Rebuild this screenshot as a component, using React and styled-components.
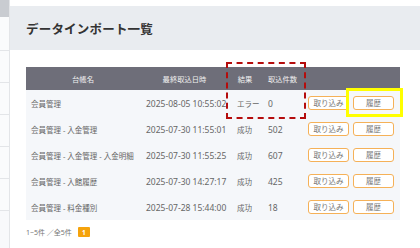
import React from 'react';
import styled, { createGlobalStyle } from 'styled-components';

const GlobalStyle = createGlobalStyle`
  html, body {
    margin: 0;
    padding: 0;
    background: #fff;
  }
  body {
    font-family: "Noto Sans", "Noto Sans CJK JP", sans-serif;
    color: #555;
  }
`;

const Page = styled.div`
  display: flex;
  width: 420px;
  height: 248px;
  overflow: hidden;
  position: relative;
`;

const Sidebar = styled.div`
  width: 9px;
  flex-shrink: 0;
  border-right: 1px solid #e3e5e8;
  background: #f8f9fb;
  display: flex;
  flex-direction: column;
`;

const SideTop = styled.div`
  height: 17px;
  background: #c9ccd1;
`;

const SideItem = styled.div`
  height: ${props => props.h || 32}px;
  border-bottom: 1px solid #e3e5e8;
  box-sizing: border-box;
  background: #fafbfc;
`;

const Main = styled.div`
  flex: 1;
  padding-top: 6px;
  display: flex;
  flex-direction: column;
`;

const TitleBar = styled.div`
  height: 44px;
  background: #e9ecf0;
  display: flex;
  align-items: center;
  padding-left: 16px;
`;

const Title = styled.h1`
  margin: 0;
  font-size: 12.5px;
  font-weight: 700;
  color: #333;
  letter-spacing: 0.2px;
`;

const Content = styled.div`
  padding: 17px 0 0 16px;
`;

const Table = styled.div`
  width: 374px;
  background: #f5f7fa;
`;

const cols = '114px 89px 32px 43px 1fr';

const HeadRow = styled.div`
  display: grid;
  grid-template-columns: ${cols};
  height: 23px;
  background: #6e6e79;
  color: #f0f0f0;
  font-size: 7.3px;
  align-items: center;
  text-align: center;
`;

const Row = styled.div`
  display: grid;
  grid-template-columns: ${cols};
  height: 26px;
  align-items: center;
  font-size: 8.5px;
  color: #666;
`;

const Cell = styled.div`
  padding-left: ${props => props.pl || 0}px;
  font-size: ${props => props.fs || 8.5}px;
  white-space: nowrap;
`;

const Actions = styled.div`
  display: flex;
  gap: 4px;
  padding-left: 4px;
`;

const Btn = styled.button`
  width: 41px;
  height: 14px;
  padding: 0;
  border: 1px solid #f5b158;
  border-radius: 3px;
  background: #fff;
  color: #777;
  font-family: inherit;
  font-size: 7.5px;
  line-height: 12px;
`;

const Pager = styled.div`
  display: flex;
  align-items: center;
  gap: 6px;
  margin-top: 7px;
  font-size: 7px;
  color: #777;
`;

const PageNum = styled.span`
  display: inline-flex;
  align-items: center;
  justify-content: center;
  width: 12px;
  height: 10px;
  background: #f5a30c;
  color: #fff;
  font-size: 6.5px;
  font-weight: 700;
  border-radius: 1px;
`;

const Mark = styled.div`
  position: absolute;
  box-sizing: border-box;
  left: ${props => props.x}px;
  top: ${props => props.y}px;
  width: ${props => props.w}px;
  height: ${props => props.h}px;
  border: ${props => props.border};
`;

const rows = [
  { name: '会員管理', date: '2025-08-05 10:55:02', result: 'エラー', count: '0' },
  { name: '会員管理 - 入金管理', date: '2025-07-30 11:55:01', result: '成功', count: '502' },
  { name: '会員管理 - 入金管理 - 入金明細', date: '2025-07-30 11:55:25', result: '成功', count: '607' },
  { name: '会員管理 - 入館履歴', date: '2025-07-30 14:27:17', result: '成功', count: '425' },
  { name: '会員管理 - 料金種別', date: '2025-07-28 15:44:00', result: '成功', count: '18' },
];

const App = () => (
  <Page>
    <GlobalStyle />
    <Sidebar>
      <SideTop />
      <SideItem h={34} />
      <SideItem />
      <SideItem />
      <SideItem />
      <SideItem />
      <SideItem />
    </Sidebar>
    <Main>
      <TitleBar>
        <Title>データインポート一覧</Title>
      </TitleBar>
      <Content>
        <Table>
          <HeadRow>
            <div>台帳名</div>
            <div>最終取込日時</div>
            <div>結果</div>
            <div>取込件数</div>
            <div />
          </HeadRow>
          {rows.map(r => (
            <Row key={r.name}>
              <Cell pl={5} fs={7.5}>{r.name}</Cell>
              <Cell pl={6}>{r.date}</Cell>
              <Cell pl={8} fs={7.5}>{r.result}</Cell>
              <Cell pl={7}>{r.count}</Cell>
              <Actions>
                <Btn>取り込み</Btn>
                <Btn>履歴</Btn>
              </Actions>
            </Row>
          ))}
        </Table>
        <Pager>
          <span>1~5件 ／全5件</span>
          <PageNum>1</PageNum>
        </Pager>
      </Content>
    </Main>
    <Mark x={226} y={62} w={80} h={57} border="2px dashed #b50d0d" />
    <Mark x={346} y={88} w={57} h={29} border="3px solid #ffff00" />
  </Page>
);

export default App;
